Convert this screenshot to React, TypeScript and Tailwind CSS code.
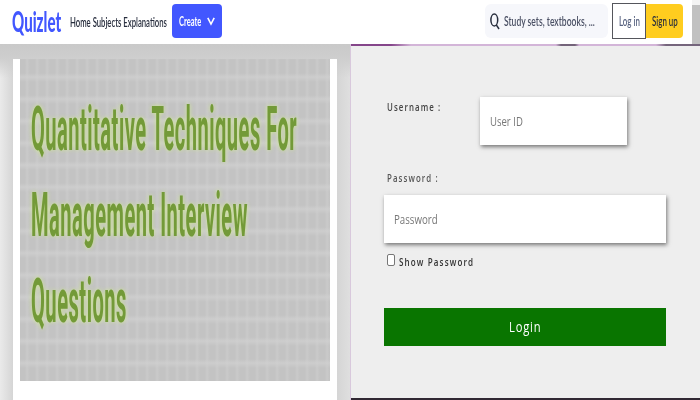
import { useLayoutEffect, useRef, useState } from 'react';

type FitProps = { text: string; width: number; className?: string };

// Condenses a line of text horizontally to the given width.
function Fit({ text, width, className = '' }: FitProps) {
  const ref = useRef<HTMLSpanElement>(null);
  const [scale, setScale] = useState(1);
  useLayoutEffect(() => {
    if (ref.current) setScale(width / ref.current.offsetWidth);
  }, [width, text]);
  return (
    <span className={`block shrink-0 whitespace-nowrap ${className}`} style={{ width }}>
      <span ref={ref} className="inline-block origin-left align-top" style={{ transform: `scaleX(${scale})` }}>
        {text}
      </span>
    </span>
  );
}

function Header() {
  return (
    <header className="flex h-[44px] w-full shrink-0 items-start bg-white font-['Lato',sans-serif] text-[#282e3e]">
      <Fit text="Quizlet" width={49} className="ml-[12px] mt-[3px] text-[28px] leading-[37px] font-black text-[#4257ff]" />
      <nav className="ml-[9px] mt-[12px] flex text-[14px] leading-[20px] font-semibold">
        <Fit text="Home Subjects Explanations" width={97} />
      </nav>
      <button className="ml-[5px] mt-[4px] flex h-[34px] w-[50px] items-center rounded-[4px] bg-[#4257ff] pl-[7px] text-white">
        <Fit text="Create" width={22} className="text-[14px] leading-[20px] font-bold" />
        <svg className="ml-[6px]" width="8" height="9" viewBox="0 0 8 9" fill="none" stroke="currentColor" strokeWidth="1.6">
          <path d="M0.8 0.8 L4 7 L7.2 0.8" />
        </svg>
      </button>
      <div className="ml-[263px] mt-[4px] flex h-[34px] w-[123px] items-center rounded-[6px] bg-[#f6f7fb] pl-[5px]">
        <svg width="10" height="19" viewBox="0 0 10 19" fill="none" stroke="#282e3e" strokeWidth="1.5">
          <ellipse cx="4.3" cy="8" rx="3.4" ry="6" />
          <path d="M6.3 12.8 L9 17" />
        </svg>
        <Fit text="Study sets, textbooks, ..." width={91} className="ml-[4px] text-[14px] leading-[20px] font-semibold text-[#4b5165]" />
      </div>
      <button className="ml-[4px] mt-[3px] flex h-[36px] w-[34px] items-center justify-center border border-[#55565c] bg-white text-[#586380]">
        <Fit text="Log in" width={21} className="text-[14px] leading-[20px] font-semibold" />
      </button>
      <button className="mt-[4px] flex h-[34px] w-[37px] items-center justify-center rounded-r-[4px] bg-[#ffcd1f]">
        <Fit text="Sign up" width={26} className="text-[14px] leading-[20px] font-semibold" />
      </button>
      <div className="ml-auto h-full w-[8px] bg-[#f3f3f3] pt-[5px]">
        <div className="h-full bg-[#c1c1c1]" />
      </div>
    </header>
  );
}

function CoverPanel() {
  return (
    <section className="w-[350px] shrink-0 bg-[linear-gradient(180deg,#c9c9c9_0px,#cecece_14px,transparent_34px),linear-gradient(90deg,#eaeaea_0px,#d5d5d5_13px,#d5d5d5_337px,#dfdfdf_350px)] pl-[13px] pt-[15px]">
      <div className="h-full w-[324px] bg-white px-[7px]">
        <div className="h-[322px] bg-[#c3c3c3] bg-[repeating-linear-gradient(90deg,transparent_0px,transparent_5px,#d0d0d088_7px,transparent_10px),repeating-linear-gradient(0deg,transparent_0px,transparent_13px,#d2d2d2aa_18px,transparent_22px)] pl-[11px] pt-[27px] font-['Roboto',sans-serif] text-[61px] leading-[86px] font-bold tracking-[1.5px] text-[#739a38]">
          <div className="blur-[0.5px]">
            <div className="drop-shadow-[0_0_2px_#cfe88f]">
              <Fit text="Quantitative Techniques For" width={266} />
              <Fit text="Management Interview" width={217} />
              <Fit text="Questions" width={96} />
            </div>
          </div>
        </div>
      </div>
    </section>
  );
}

function LoginPanel() {
  const field = 'flex h-[48px] items-center bg-white pl-[10px] text-[13px] leading-[20px] text-[#777] shadow-[1px_2px_4px_rgba(0,0,0,0.5)]';
  return (
    <section className="flex min-w-0 flex-1 flex-col border-l border-[#d8c8dc] bg-[#eee] font-['Open_Sans',sans-serif] text-[#333]">
      <div className="h-[2px] shrink-0 bg-[linear-gradient(90deg,#85468a_0px,#85468a_40px,#d3b5d8_60px,#d3b5d8_205px,#74647a_210px,#74647a_224px,#d3b5d8_228px,#d3b5d8_305px,#75657c_315px)]" />
      <form className="flex h-[352px] shrink-0 flex-col pl-[33px]" onSubmit={(e) => e.preventDefault()}>
        <div className="flex">
          <Fit text="Username :" width={54} className="ml-[3px] mt-[51px] text-[11.5px] leading-[20px] font-semibold tracking-[1.6px] text-[#444]" />
          <div className={`${field} ml-[39px] mt-[51px] w-[147px]`}>
            <Fit text="User ID" width={33} />
          </div>
        </div>
        <Fit text="Password :" width={52} className="ml-[3px] mt-[23px] text-[11.5px] leading-[20px] font-semibold tracking-[1.6px] text-[#555]" />
        <div className={`${field} mt-[7px] w-[282px]`}>
          <Fit text="Password" width={44} />
        </div>
        <label className="mt-[9px] flex h-[20px] items-center">
          <span className="mb-[4px] ml-[3px] h-[12px] w-[8px] rounded-[2px] border border-[#777] bg-white" />
          <Fit text="Show Password" width={75} className="ml-[4px] text-[11.5px] leading-[20px] font-semibold tracking-[1.6px]" />
        </label>
        <button className="mt-[36px] flex h-[38px] w-[282px] items-center justify-center bg-[#097500] text-white">
          <Fit text="Login" width={32} className="text-[14px] leading-[20px] font-medium tracking-[1px]" />
        </button>
      </form>
      <div className="flex-1 bg-[#302833]" />
    </section>
  );
}

export default function App() {
  return (
    <div className="flex h-[400px] w-[700px] flex-col overflow-hidden bg-white">
      <Header />
      <main className="flex min-h-0 flex-1">
        <CoverPanel />
        <LoginPanel />
      </main>
    </div>
  );
}
